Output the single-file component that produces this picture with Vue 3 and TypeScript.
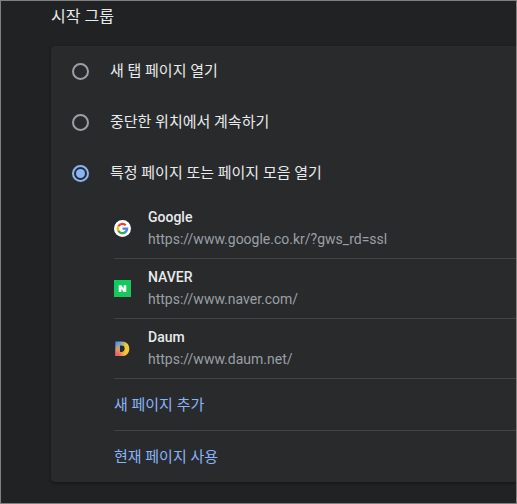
<script setup lang="ts">
import { ref } from 'vue'

interface StartupOption {
  value: string
  label: string
}

interface StartupPage {
  icon: 'google' | 'naver' | 'daum'
  name: string
  url: string
}

const options: StartupOption[] = [
  { value: 'newtab', label: '새 탭 페이지 열기' },
  { value: 'continue', label: '중단한 위치에서 계속하기' },
  { value: 'pages', label: '특정 페이지 또는 페이지 모음 열기' },
]

const pages: StartupPage[] = [
  { icon: 'google', name: 'Google', url: 'https://www.google.co.kr/?gws_rd=ssl' },
  { icon: 'naver', name: 'NAVER', url: 'https://www.naver.com/' },
  { icon: 'daum', name: 'Daum', url: 'https://www.daum.net/' },
]

const selected = ref('pages')
</script>

<template>
  <main class="settings">
    <h1 class="title">시작 그룹</h1>
    <section class="card">
      <div class="options">
        <label v-for="option in options" :key="option.value" class="option">
          <input v-model="selected" class="radio" type="radio" name="startup" :value="option.value" />
          <span>{{ option.label }}</span>
        </label>
      </div>
      <div v-if="selected === 'pages'" class="details">
        <ul class="pages">
          <li v-for="page in pages" :key="page.name" class="page">
            <svg v-if="page.icon === 'google'" class="favicon" viewBox="0 0 18 18" aria-hidden="true">
              <circle cx="9" cy="9" r="9" fill="#fff" />
              <g fill="none" stroke-width="2.5">
                <path d="M4.7 6.6A4.9 4.9 0 0 1 12.5 5.6" stroke="#ea4335" />
                <path d="M4.7 11.4A4.9 4.9 0 0 1 4.7 6.6" stroke="#fbbc05" />
                <path d="M12.2 12.7A4.9 4.9 0 0 1 4.7 11.4" stroke="#34a853" />
                <path d="M9 9.1H13.9A4.9 4.9 0 0 1 12.2 12.7" stroke="#4285f4" />
              </g>
            </svg>
            <svg v-else-if="page.icon === 'naver'" class="favicon" viewBox="0 0 18 18" aria-hidden="true">
              <defs>
                <linearGradient id="naver-fill" x1="0" y1="0" x2="1" y2="1">
                  <stop offset="0" stop-color="#08cf5d" />
                  <stop offset="1" stop-color="#20c45b" />
                </linearGradient>
              </defs>
              <rect width="18" height="18" fill="url(#naver-fill)" />
              <path d="M5 5.5H7.8L10.2 9V5.5H13V12.8H10.2L7.8 9.3V12.8H5Z" fill="#fff" />
            </svg>
            <svg v-else class="favicon" viewBox="0 0 18 18" aria-hidden="true">
              <defs>
                <linearGradient id="daum-base" x1="0" y1="0" x2="1" y2="0.3">
                  <stop offset="0.15" stop-color="#5a92f4" />
                  <stop offset="0.5" stop-color="#9cab9c" />
                  <stop offset="0.8" stop-color="#f4cc30" />
                </linearGradient>
                <radialGradient id="daum-warm" cx="0.1" cy="1" r="0.85">
                  <stop offset="0.15" stop-color="#f4605c" />
                  <stop offset="0.55" stop-color="#f79a48" stop-opacity="0.75" />
                  <stop offset="1" stop-color="#fbc52c" stop-opacity="0" />
                </radialGradient>
                <path
                  id="daum-letter"
                  d="M1.5 1.5H8.5C13.2 1.5 16.2 4.7 16.2 9.2S13.2 17 8.5 17H1.5ZM6.3 5.9V12.6H8.2C10.2 12.6 11.3 11.2 11.3 9.2S10.2 5.9 8.2 5.9Z"
                  fill-rule="evenodd"
                />
              </defs>
              <use href="#daum-letter" fill="url(#daum-base)" />
              <use href="#daum-letter" fill="url(#daum-warm)" />
            </svg>
            <div class="text">
              <div class="name">{{ page.name }}</div>
              <div class="url">{{ page.url }}</div>
            </div>
          </li>
        </ul>
        <div class="action"><a class="link" href="#add">새 페이지 추가</a></div>
        <div class="action"><a class="link" href="#current">현재 페이지 사용</a></div>
      </div>
    </section>
  </main>
</template>

<style>
body {
  background: #202124;
}
</style>

<style scoped>
.settings {
  box-sizing: border-box;
  min-height: 100vh;
  padding: 0 0 21px 50px;
  overflow: hidden;
  border: 1px solid #808080;
  background: #212224;
  color: #e8eaed;
  font-family: Roboto, "Noto Sans CJK KR", sans-serif;
  font-size: 15px;
  line-height: 20px;
}

.title {
  margin: 0;
  padding: 4px 0 17px;
  font-size: 16px;
  font-weight: 400;
  line-height: 24px;
}

.card {
  border-radius: 4px 0 0 4px;
  background: #292a2c;
  box-shadow: 0 1px 3px rgba(0, 0, 0, 0.45);
}

.options {
  display: flex;
  flex-direction: column;
  gap: 1px;
  padding-bottom: 1px;
}

.option {
  display: flex;
  align-items: center;
  gap: 21px;
  height: 50px;
  padding-left: 21px;
}

.radio {
  display: grid;
  flex: none;
  place-items: center;
  appearance: none;
  box-sizing: border-box;
  width: 17px;
  height: 17px;
  margin: 0;
  border: 2px solid #9aa0a6;
  border-radius: 50%;
}

.radio:checked {
  border-color: #8ab4f8;
}

.radio:checked::before {
  width: 9px;
  height: 9px;
  border-radius: 50%;
  background: #8ab4f8;
  content: "";
}

.details {
  padding-left: 63px;
}

.pages {
  margin: 0;
  padding: 0;
  list-style: none;
}

.page {
  display: flex;
  align-items: center;
  gap: 17px;
  height: 59px;
  border-bottom: 1px solid #424346;
}

.favicon {
  flex: none;
  width: 17px;
  height: 17px;
}

.text {
  padding-bottom: 1px;
  font-size: 14px;
  line-height: 22px;
}

.name {
  font-weight: 500;
}

.url {
  color: #9aa0a6;
}

.action {
  display: flex;
  align-items: center;
  height: 51px;
}

.action + .action {
  border-top: 1px solid #424346;
}

.link {
  color: #8ab4f8;
  text-decoration: none;
}
</style>
